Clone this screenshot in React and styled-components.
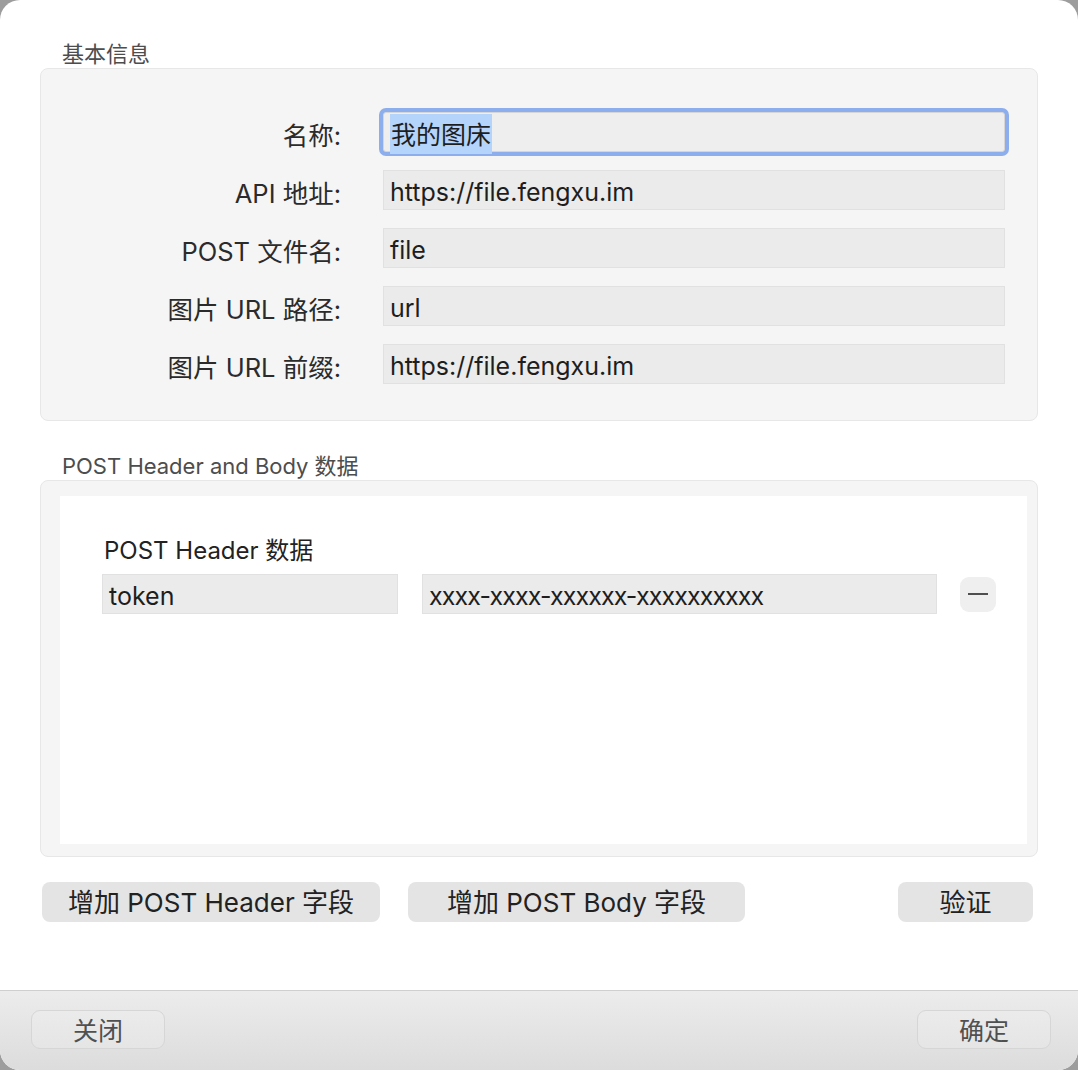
import styled, { createGlobalStyle } from "styled-components";

const GlobalStyle = createGlobalStyle`
  *, *::before, *::after {
    box-sizing: border-box;
  }
  html, body {
    margin: 0;
    padding: 0;
    background: #9d9d9d;
  }
  body {
    font-family: "Inter", "Noto Sans CJK SC", sans-serif;
  }
`;

const Window = styled.div`
  width: 1078px;
  height: 1070px;
  border-radius: 20px;
  background: #ffffff;
  display: flex;
  flex-direction: column;
  overflow: hidden;
`;

const Content = styled.div`
  flex: 1;
  padding: 40px 40px 0 40px;
  display: flex;
  flex-direction: column;
`;

const SectionTitle = styled.div`
  margin-left: 22px;
  margin-top: ${(props) => props.$top || 0}px;
  font-size: 22px;
  line-height: 28px;
  color: #4d4d4d;
`;

const GroupBox = styled.div`
  background: #f5f5f5;
  border: 1px solid #e7e7e7;
  border-radius: 8px;
`;

const FormBox = styled(GroupBox)`
  display: grid;
  grid-template-columns: 300px 622px;
  column-gap: 42px;
  row-gap: 18px;
  padding: 43px 0 36px 0;
`;

const Label = styled.label`
  justify-self: end;
  align-self: center;
  padding-top: 3px;
  font-size: 25.5px;
  color: #2b2b2b;
`;

const Field = styled.div`
  height: 40px;
  background: #ebebeb;
  border: 1px solid #e1e1e1;
  display: flex;
  align-items: center;
  padding: 4px 6px 0;
  font-size: 25px;
  color: #1e1e1e;
  white-space: nowrap;
  letter-spacing: ${(props) => props.$track || 0}px;
  width: ${(props) => (props.$w ? `${props.$w}px` : "auto")};

  ${(props) =>
    props.$focused &&
    `
    background: #eeeeee;
    border-color: #d6d6d6;
    box-shadow: 0 0 0 4px #8daeec;
    border-radius: 3px;
  `}
`;

const Selected = styled.span`
  background: #b5d4fb;
  padding: 1px 1px 3px;
`;

const ScrollBox = styled(GroupBox)`
  height: 377px;
  padding: 15px 10px 12px 19px;
  display: flex;
`;

const WhitePanel = styled.div`
  flex: 1;
  background: #ffffff;
  padding: 40px 0 0 42px;
`;

const SubTitle = styled.div`
  font-size: 24px;
  color: #222;
  margin: 0 0 8px 2px;
  line-height: 30px;
`;

const KeyRow = styled.div`
  display: flex;
  align-items: center;
  gap: 24px;
`;

const MinusButton = styled.button`
  width: 36px;
  height: 35px;
  margin-left: -1px;
  border: none;
  border-radius: 9px;
  background: #efefef;
  display: flex;
  align-items: center;
  justify-content: center;
  padding: 0;

  &::before {
    content: "";
    width: 20px;
    height: 2px;
    background: #4f4f4f;
  }
`;

const ActionRow = styled.div`
  display: flex;
  align-items: center;
  margin: 25px 5px 0 2px;
`;

const ActionButton = styled.button`
  height: 40px;
  width: ${(props) => props.$w}px;
  margin-left: ${(props) => props.$ml || 0}px;
  border: none;
  border-radius: 8px;
  background: #e4e4e4;
  font-family: inherit;
  font-size: 26px;
  color: #222;
  padding: 0 0 4px;
`;

const Footer = styled.div`
  height: 80px;
  border-top: 1px solid #cfcfcf;
  background: linear-gradient(#ececec, #dcdcdc);
  display: flex;
  justify-content: space-between;
  align-items: flex-start;
  padding: 19px 27px 0 31px;
`;

const FooterButton = styled.button`
  width: 134px;
  height: 39px;
  border: 1.5px solid #d6d6d6;
  border-radius: 9px;
  background: linear-gradient(#ebebeb, #e5e5e5);
  font-family: inherit;
  font-size: 25px;
  color: #505050;
  padding: 0 0 3px;
`;

const fields = [
  { label: "API 地址:", value: "https://file.fengxu.im" },
  { label: "POST 文件名:", value: "file" },
  { label: "图片 URL 路径:", value: "url" },
  { label: "图片 URL 前缀:", value: "https://file.fengxu.im" },
];

export default function App() {
  return (
    <>
      <GlobalStyle />
      <Window>
        <Content>
          <SectionTitle>基本信息</SectionTitle>
          <FormBox>
            <Label>名称:</Label>
            <Field $focused>
              <Selected>我的图床</Selected>
            </Field>
            {fields.map((f) => [
              <Label key={f.label}>{f.label}</Label>,
              <Field key={f.label + "v"}>{f.value}</Field>,
            ])}
          </FormBox>

          <SectionTitle $top={31}>POST Header and Body 数据</SectionTitle>
          <ScrollBox>
            <WhitePanel>
              <SubTitle>POST Header 数据</SubTitle>
              <KeyRow>
                <Field $w={296}>token</Field>
                <Field $w={515} $track={-0.9}>
                  xxxx-xxxx-xxxxxx-xxxxxxxxxx
                </Field>
                <MinusButton aria-label="remove" />
              </KeyRow>
            </WhitePanel>
          </ScrollBox>

          <ActionRow>
            <ActionButton $w={338}>增加 POST Header 字段</ActionButton>
            <ActionButton $w={337} $ml={28}>
              增加 POST Body 字段
            </ActionButton>
            <ActionButton $w={135} $ml={153}>
              验证
            </ActionButton>
          </ActionRow>
        </Content>
        <Footer>
          <FooterButton>关闭</FooterButton>
          <FooterButton>确定</FooterButton>
        </Footer>
      </Window>
    </>
  );
}
